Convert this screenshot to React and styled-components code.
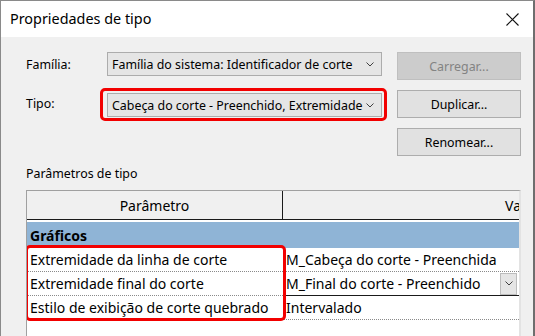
import React from 'react';
import styled, { createGlobalStyle } from 'styled-components';

const GlobalStyle = createGlobalStyle`
  html, body {
    margin: 0;
    padding: 0;
    background: #f0f0f0;
    overflow: hidden;
  }
  body {
    font-family: "Noto Sans", "Open Sans", sans-serif;
    font-size: 12.4px;
    color: #000;
  }
`;

const Window = styled.div`
  width: 535px;
  height: 336px;
  box-sizing: border-box;
  border-top: 1px solid #8a8a8a;
  border-left: 1px solid #8a8a8a;
  border-right: 2px solid #6e6e6e;
  background: #f0f0f0;
  display: flex;
  flex-direction: column;
  overflow: hidden;
`;

const TitleBar = styled.div`
  height: 36px;
  flex: none;
  background: #fff;
  display: flex;
  align-items: center;
  justify-content: space-between;
  padding: 0 14px 0 9px;
`;

const Title = styled.span`
  font-size: 14.4px;
  position: relative;
  top: -1px;
`;

const CloseIcon = styled.svg`
  width: 13px;
  height: 13px;
`;

const Content = styled.div`
  flex: 1;
  padding: 15px 12px 0 25px;
  display: flex;
  flex-direction: column;
`;

const FormGrid = styled.div`
  display: grid;
  grid-template-columns: 66px 275px 124px;
  column-gap: 15px;
  grid-auto-rows: 28px;
  row-gap: 10px;
  align-items: start;
`;

const Label = styled.div`
  height: 24px;
  display: flex;
  align-items: center;
  margin-top: ${(p) => p.$offset || 0}px;
`;

const Combo = styled.div`
  height: 24px;
  box-sizing: border-box;
  border: 1px solid #acacac;
  background: #e5e5e5;
  display: flex;
  align-items: center;
  justify-content: space-between;
  padding: 0 7px 0 4px;
  white-space: nowrap;
`;

const Highlight = styled.div`
  border: 3px solid #f20000;
  border-radius: 5px;
  padding: 2px 2px 1px 4px;
  margin: -2px -5px 0 -7px;
`;

const Chevron = styled.svg`
  width: 8px;
  height: 5px;
  flex: none;
`;

const Button = styled.div`
  height: 28px;
  box-sizing: border-box;
  border: 1px solid ${(p) => (p.$disabled ? '#bfbfbf' : '#adadad')};
  background: ${(p) => (p.$disabled ? '#cccccc' : '#e1e1e1')};
  color: ${(p) => (p.$disabled ? '#838383' : '#000')};
  display: flex;
  align-items: center;
  justify-content: center;
  grid-column: 3;
`;

const Spacer = styled.div`
  grid-column: 1 / span 2;
`;

const SectionLabel = styled.div`
  margin-top: 10px;
  height: 16px;
  line-height: 16px;
`;

const TableFrame = styled.div`
  position: relative;
  margin-top: 8px;
  flex: 1;
  background: #fff;
  border-top: 1px solid #a0a0a0;
  border-left: 1px solid #a0a0a0;
  border-right: 2px solid #e3e3e3;
  overflow: hidden;
  font-size: 14px;
`;

const Grid = styled.div`
  display: grid;
  grid-template-columns: 256px 478px;
  width: 734px;
`;

const HeadCell = styled.div`
  height: 28px;
  background: #f0f0f0;
  border-bottom: 1px solid #1a1a1a;
  border-right: ${(p) => (p.$divider ? '1px solid #1a1a1a' : 'none')};
  display: flex;
  align-items: center;
  justify-content: center;
`;

const GroupRow = styled.div`
  grid-column: 1 / span 2;
  margin-top: 2px;
  height: 26px;
  background: #8fb4d6;
  font-weight: bold;
  display: flex;
  align-items: center;
  padding-left: 3px;
`;

const Cell = styled.div`
  height: 24px;
  box-sizing: border-box;
  border-bottom: 1px ${(p) => (p.$active ? 'solid #1a1a1a' : 'dotted #8a8a8a')};
  display: flex;
  align-items: center;
  padding-left: 3px;
  white-space: nowrap;
`;

const ValueText = styled.span`
  width: 214px;
  flex: none;
  overflow: hidden;
`;

const DropButton = styled.div`
  width: 17px;
  height: 22px;
  box-sizing: border-box;
  background: #e5e5e5;
  border: 1px solid #bcbcbc;
  display: flex;
  align-items: center;
  justify-content: center;
`;

const RowHighlight = styled.div`
  position: absolute;
  left: -2px;
  top: 54px;
  width: 255px;
  height: 70px;
  border: 3px solid #f20000;
  border-radius: 5px;
  pointer-events: none;
`;

const ChevronIcon = () => (
  <Chevron viewBox="0 0 8 5">
    <path d="M0.5 0.5 L4 4 L7.5 0.5" fill="none" stroke="#404040" strokeWidth="1" />
  </Chevron>
);

const rows = [
  { name: 'Extremidade da linha de corte', value: 'M_Cabeça do corte - Preenchida' },
  { name: 'Extremidade final do corte', value: 'M_Final do corte - Preenchido', active: true },
  { name: 'Estilo de exibição de corte quebrado', value: 'Intervalado' },
];

export default function App() {
  return (
    <>
      <GlobalStyle />
      <Window>
        <TitleBar>
          <Title>Propriedades de tipo</Title>
          <CloseIcon viewBox="0 0 13 13">
            <path d="M0.5 0.5 L12.5 12.5 M12.5 0.5 L0.5 12.5" stroke="#111" strokeWidth="1.1" />
          </CloseIcon>
        </TitleBar>
        <Content>
          <FormGrid>
            <Label>Família:</Label>
            <Combo>
              <span>Família do sistema: Identificador de corte</span>
              <ChevronIcon />
            </Combo>
            <Button $disabled>Carregar...</Button>

            <Label $offset={1}>Tipo:</Label>
            <Highlight>
              <Combo>
                <span>Cabeça do corte - Preenchido, Extremidade</span>
                <ChevronIcon />
              </Combo>
            </Highlight>
            <Button>Duplicar...</Button>

            <Spacer />
            <Button>Renomear...</Button>
          </FormGrid>

          <SectionLabel>Parâmetros de tipo</SectionLabel>

          <TableFrame>
            <Grid>
              <HeadCell $divider>Parâmetro</HeadCell>
              <HeadCell>Valor</HeadCell>
              <GroupRow>Gráficos</GroupRow>
              {rows.map((r) => (
                <React.Fragment key={r.name}>
                  <Cell>{r.name}</Cell>
                  <Cell $active={r.active}>
                    {r.active ? (
                      <>
                        <ValueText>{r.value}</ValueText>
                        <DropButton>
                          <ChevronIcon />
                        </DropButton>
                      </>
                    ) : (
                      r.value
                    )}
                  </Cell>
                </React.Fragment>
              ))}
            </Grid>
            <RowHighlight />
          </TableFrame>
        </Content>
      </Window>
    </>
  );
}
